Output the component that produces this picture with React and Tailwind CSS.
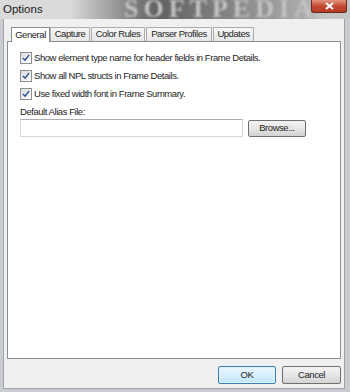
export default function App() {
  const txt = "text-[9.5px] tracking-[-0.45px] text-[#1e1e1e] whitespace-nowrap";
  const Check = ({ label }) => (
    <div className="flex items-center h-[18px]">
      <div className="w-[12px] h-[12px] border border-[#8e8f8f] bg-gradient-to-br from-[#dcdcdc] to-[#ffffff] flex items-center justify-center">
        <svg width="8" height="8" viewBox="0 0 9 9">
          <path d="M1 4.5 L3.5 7 L8 1" fill="none" stroke="#2a4f8f" strokeWidth="1.6" />
        </svg>
      </div>
      <span className={`ml-[2px] ${txt}`}>{label}</span>
    </div>
  );
  const tabs = [
    { t: "Capture", w: 38 },
    { t: "Color Rules", w: 52 },
    { t: "Parser Profiles", w: 64 },
    { t: "Updates", w: 39 },
  ];
  return (
    <div className="w-[350px] h-[392px] flex flex-col bg-[#c9ccd1] font-['Liberation_Sans',sans-serif] overflow-hidden">
      {/* title bar */}
      <div className="relative h-[19px] shrink-0 bg-gradient-to-r from-[#dadada] from-[20%] via-[#5f6160] via-[45%] to-[#c4c6c5] overflow-hidden">
        <div className="absolute left-[315px] top-[-8px] w-[60px] h-[40px] bg-[#c4c6c5] blur-[6px]" />
        <div className="absolute left-[124px] top-[-6px] text-[26px] leading-[30px] font-['Liberation_Serif',serif] font-bold tracking-[5px] whitespace-nowrap text-[#c2c4c3] blur-[0.8px]">
          SOFTPEDIA
        </div>
        <div className="absolute left-[3px] top-[2px] text-[11.5px] text-[#1a1a1a] leading-[14px]">Options</div>
        <div className="absolute left-[311px] top-0 w-[36px] h-[13px] rounded-b-[3px] border border-[#6b2a20] border-t-0 bg-gradient-to-b from-[#e0937f] via-[#c44a33] to-[#b53a22] flex items-center justify-center">
          <svg width="9" height="8" viewBox="0 0 9 8">
            <path d="M1 1 L8 7 M8 1 L1 7" stroke="#ffffff" strokeWidth="2" />
          </svg>
        </div>
      </div>
      {/* client */}
      <div className="flex-1 ml-[3px] mb-[3px] mr-[5px] border border-[#a0a2a5] border-t-0 bg-[#f0f0f0] flex flex-col px-[3px]">
        {/* tab strip */}
        <div className="flex items-end h-[22px] pl-[4px]">
          <div className={`relative z-10 h-[15px] w-[39px] bg-white border border-[#898c95] border-b-0 mb-[-1px] flex items-start justify-center leading-[12px] pt-[1px] ${txt}`}>
            General
          </div>
          {tabs.map((x, i) => (
            <div
              key={x.t}
              style={{ width: x.w }}
              className={`h-[12px] box-content pb-[1px] border border-[#acacac] border-b-0 bg-gradient-to-b from-[#f6f6f6] to-[#e7e7e7] flex items-center justify-center leading-[12px] ${txt} ${i === 0 ? "" : "ml-[1px]"}`}
            >
              {x.t}
            </div>
          ))}
        </div>
        {/* panel */}
        <div className="h-[318px] bg-white border border-[#898c95] px-[12px] pt-[7px]">
          <Check label="Show element type name for header fields in Frame Details." />
          <Check label="Show all NPL structs in Frame Details." />
          <Check label="Use fixed width font in Frame Summary." />
          <div className={`mt-[3px] leading-[12px] ${txt}`}>Default Alias File:</div>
          <div className="flex items-center mt-[1px]">
            <div className="w-[223px] h-[18px] border border-[#d5d7db] border-t-[#abadb3] bg-white" />
            <button className={`ml-[5px] w-[58px] h-[17px] rounded-[2px] border border-[#707070] bg-gradient-to-b from-[#f3f3f3] via-[#e6e6e6] to-[#d3d3d3] leading-[12px] ${txt}`}>
              Browse...
            </button>
          </div>
        </div>
        {/* buttons */}
        <div className="flex justify-end mt-[7px] gap-[6px]">
          <button className={`w-[58px] h-[18px] rounded-[2px] border border-[#3c7fb1] bg-gradient-to-b from-[#eaf6fd] via-[#d9f0fc] to-[#bee6fd] leading-[12px] shadow-[inset_0_0_0_1px_#dff2fc] ${txt}`}>
            OK
          </button>
          <button className={`w-[59px] h-[18px] rounded-[2px] border border-[#707070] bg-gradient-to-b from-[#f3f3f3] via-[#e6e6e6] to-[#d3d3d3] leading-[12px] ${txt}`}>
            Cancel
          </button>
        </div>
      </div>
    </div>
  );
}
